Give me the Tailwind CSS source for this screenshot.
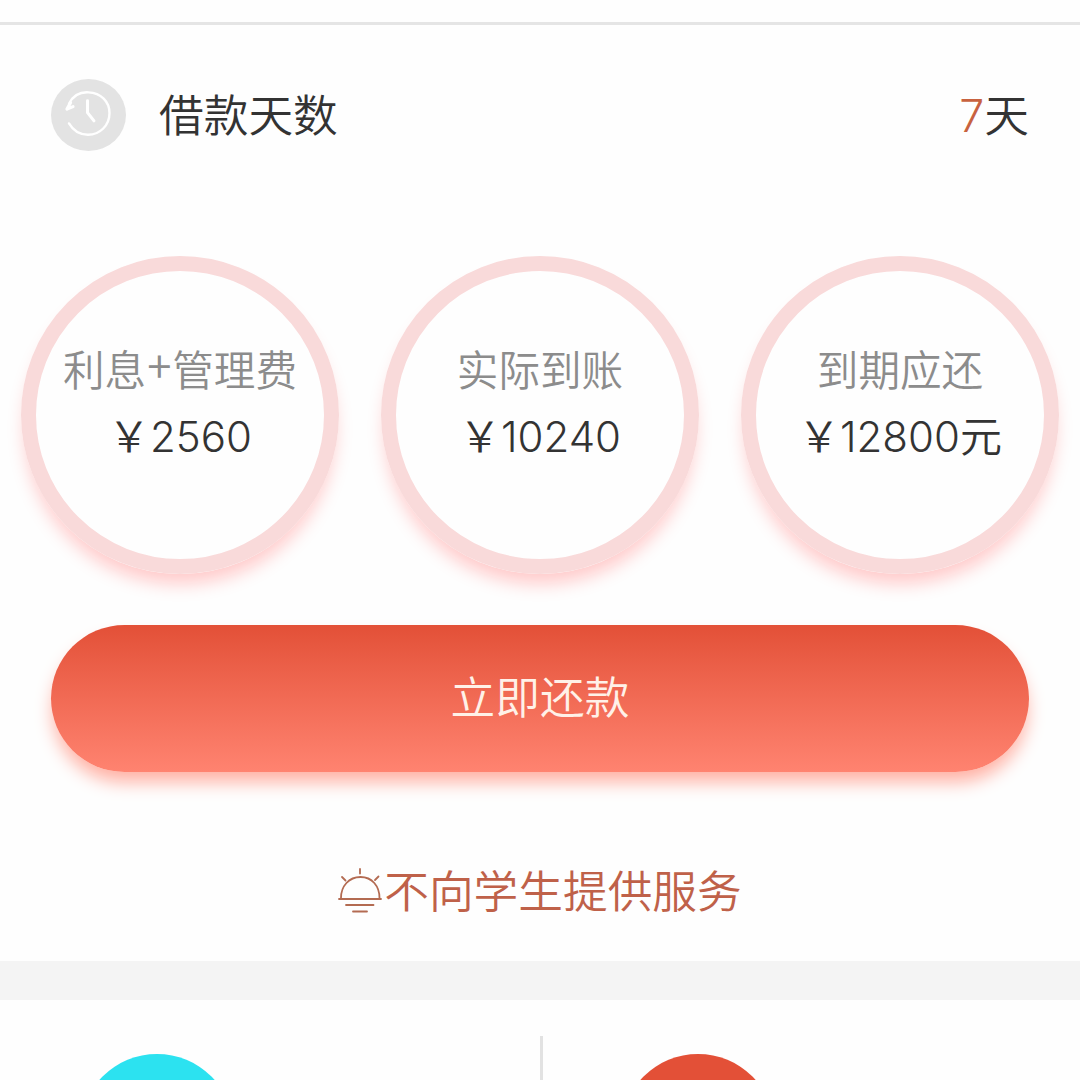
<!DOCTYPE html>
<html lang="zh-CN">
<head>
<meta charset="utf-8">
<title>借款详情</title>
<script src="https://cdn.jsdelivr.net/npm/@tailwindcss/browser@4"></script>
</head>
<body class="h-[1080px] w-[1080px] overflow-hidden bg-[#fefefe] font-['Inter','Noto_Sans_CJK_SC',sans-serif] font-[350] text-[#333]">
<main class="flex h-[1080px] flex-col overflow-hidden">
  <div class="h-[25px] shrink-0 border-b-[3px] border-[#e5e5e5]"></div>

  <section class="mt-[54px] flex h-[72px] shrink-0 items-center pr-[51px] pl-[51px] text-[44.7px] leading-[72px]">
    <svg class="h-[72px] w-[75px]" viewBox="0 0 75 73" preserveAspectRatio="none" fill="none">
      <ellipse cx="37.5" cy="36.5" rx="37.5" ry="36.5" fill="#e3e3e3"/>
      <g stroke="#fff" stroke-linecap="round" stroke-linejoin="round">
        <path d="M18 25C22 17 29 13 37.500 13.500C50 14 58.500 23 58.500 34.500C58.500 47 49 56.500 37 56.500C29 56.500 22 52 18 45" stroke-width="2.400"/>
        <path d="M16 30.500L19.500 24M16 30.500L22 28" stroke-width="3.200"/>
        <path d="M36.500 22V34L43 42.500" stroke-width="3"/>
      </g>
    </svg>
    <h1 class="ml-[33px] pt-[2px]">借款天数</h1>
    <p class="ml-auto flex pt-[2px]"><span class="font-light text-[#c8623f]">7</span><span>天</span></p>
  </section>

  <section class="mt-[105px] flex h-[318px] shrink-0 justify-between px-[21px] text-center">
    <div class="h-[318px] w-[318px] rounded-full border-[15px] border-[#f9dada] pt-[70px] shadow-[0_14px_18px_-4px_#ffcaca]">
      <p class="text-[41.6px] leading-[60px] whitespace-nowrap text-[#8c8c8c]">利息<span class="relative -top-[3px] inline-block w-[26px] font-['Noto_Sans_CJK_SC',sans-serif] text-[44px] leading-none">+</span>管理费</p>
      <p class="mt-[6px] text-[42px] leading-[60px] whitespace-nowrap">￥<span class="font-light">2560</span></p>
    </div>
    <div class="h-[318px] w-[318px] rounded-full border-[15px] border-[#f9dada] pt-[70px] shadow-[0_14px_18px_-4px_#ffcaca]">
      <p class="text-[41.6px] leading-[60px] whitespace-nowrap text-[#8c8c8c]">实际到账</p>
      <p class="mt-[6px] text-[42px] leading-[60px] whitespace-nowrap">￥<span class="font-light">10240</span></p>
    </div>
    <div class="h-[318px] w-[318px] rounded-full border-[15px] border-[#f9dada] pt-[70px] shadow-[0_14px_18px_-4px_#ffcaca]">
      <p class="text-[41.6px] leading-[60px] whitespace-nowrap text-[#8c8c8c]">到期应还</p>
      <p class="mt-[6px] text-[42px] leading-[60px] whitespace-nowrap">￥<span class="font-light">12800</span>元</p>
    </div>
  </section>

  <button class="mx-[51px] mt-[51px] h-[147px] shrink-0 rounded-full bg-linear-to-b from-[#e35037] to-[#ff8370] text-[44.7px] leading-[147px] font-[350] text-[#fff1e8] shadow-[0_12px_18px_-2px_#ffb0a3]">立即还款</button>

  <p class="mt-[86px] flex h-[66px] shrink-0 items-center justify-center text-[44.7px] leading-[66px] text-[#bf6149]">
    <svg class="mr-[2px] h-[46px] w-[44px] shrink-0" viewBox="0 0 44 46" fill="none" stroke="#b36b52" stroke-width="1.800" stroke-linecap="round">
      <path d="M1 31H43M3 30C3 18 11 9 22.500 9C34 9 41.500 18 41.500 30M22 1V5.500M4 9L7.500 12.500M40.500 8.500L37 12M8 37H35.500M15 43.500H29"/>
    </svg>
    <span class="pt-[2px]">不向学生提供服务</span>
  </p>

  <div class="mt-[37px] h-[39px] shrink-0 bg-[#f4f4f4]"></div>

  <section class="flex h-[80px] shrink-0 overflow-hidden">
    <div class="w-[540px] pt-[54px] pl-[80px]"><div class="h-[154px] w-[154px] rounded-full bg-[#2ce2f0]"></div></div>
    <div class="mt-[36px] h-[44px] w-[3px] bg-[#e2e2e2]"></div>
    <div class="pt-[54px] pl-[78px]"><div class="h-[154px] w-[154px] rounded-full bg-[#e35037]"></div></div>
  </section>
</main>
</body>
</html>
